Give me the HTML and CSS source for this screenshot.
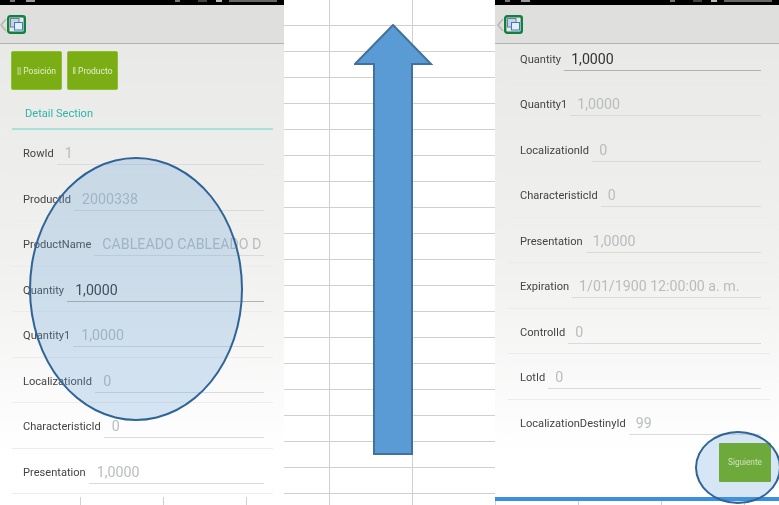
FILE: index.html
```html
<!DOCTYPE html>
<html>
<head>
    <title>Detail Section</title>
    <link rel="stylesheet" href="styles.css">
</head>
<body>
    <div class="sheet">
        <!-- First screen: top of the form -->
        <div class="phone">
            <div class="status">
                <span class="dot dot-a"></span><span class="dot dot-b"></span>
                <span class="dot dot-c"></span><span class="dot dot-d"></span><span class="dot dot-e"></span><span class="dot dot-f"></span>
            </div>
            <div class="toolbar">
                <svg class="back" width="7" height="14" viewBox="0 0 7 14"><path d="M6 1 L1 7 L6 13" fill="none" stroke="#b4b6b4" stroke-width="1.5"/></svg>
                <svg class="app-icon" width="19" height="19" viewBox="0 0 19 19">
                    <rect x="1.2" y="1.2" width="16.6" height="16.6" rx="2" fill="#e3e9ec" stroke="#12803f" stroke-width="2.4"/>
                    <rect x="3.5" y="3.5" width="8.5" height="8.5" fill="#c6d3e4" stroke="#6d7f99"/>
                    <rect x="7.5" y="7.5" width="8" height="7.5" fill="#e6eef6" stroke="#3f78c4"/>
                </svg>
            </div>
            <div class="content">
                <div class="actions">
                    <button class="action">|| Posición</button>
                    <button class="action">‖ Producto</button>
                </div>
                <div class="section-tab">Detail Section</div>
                <div class="rows">
                    <div class="row"><span class="label">RowId</span><span class="field">1</span></div>
                    <div class="row"><span class="label">ProductId</span><span class="field">2000338</span></div>
                    <div class="row"><span class="label">ProductName</span><span class="field">CABLEADO CABLEADO D</span></div>
                    <div class="row"><span class="label">Quantity</span><span class="field active">1,0000</span></div>
                    <div class="row"><span class="label">Quantity1</span><span class="field">1,0000</span></div>
                    <div class="row"><span class="label">LocalizationId</span><span class="field">0</span></div>
                    <div class="row"><span class="label">CharacteristicId</span><span class="field">0</span></div>
                    <div class="row"><span class="label">Presentation</span><span class="field">1,0000</span></div>
                </div>
            </div>
        </div>

        <!-- Second screen: form scrolled to the end -->
        <div class="phone phone-end">
            <div class="status">
                <span class="dot dot-a"></span><span class="dot dot-b"></span>
                <span class="dot dot-c"></span><span class="dot dot-d"></span><span class="dot dot-e"></span><span class="dot dot-f"></span>
            </div>
            <div class="toolbar">
                <svg class="back" width="7" height="14" viewBox="0 0 7 14"><path d="M6 1 L1 7 L6 13" fill="none" stroke="#b4b6b4" stroke-width="1.5"/></svg>
                <svg class="app-icon" width="19" height="19" viewBox="0 0 19 19">
                    <rect x="1.2" y="1.2" width="16.6" height="16.6" rx="2" fill="#e3e9ec" stroke="#12803f" stroke-width="2.4"/>
                    <rect x="3.5" y="3.5" width="8.5" height="8.5" fill="#c6d3e4" stroke="#6d7f99"/>
                    <rect x="7.5" y="7.5" width="8" height="7.5" fill="#e6eef6" stroke="#3f78c4"/>
                </svg>
            </div>
            <div class="content">
                <div class="rows rows-scrolled">
                    <div class="row"><span class="label">Quantity</span><span class="field active">1,0000</span></div>
                    <div class="row"><span class="label">Quantity1</span><span class="field">1,0000</span></div>
                    <div class="row"><span class="label">LocalizationId</span><span class="field">0</span></div>
                    <div class="row"><span class="label">CharacteristicId</span><span class="field">0</span></div>
                    <div class="row"><span class="label">Presentation</span><span class="field">1,0000</span></div>
                    <div class="row"><span class="label">Expiration</span><span class="field">1/01/1900 12:00:00 a. m.</span></div>
                    <div class="row"><span class="label">ControlId</span><span class="field">0</span></div>
                    <div class="row"><span class="label">LotId</span><span class="field">0</span></div>
                    <div class="row row-last"><span class="label">LocalizationDestinyId</span><span class="field">99</span></div>
                </div>
                <div class="next-wrap">
                    <button class="next">Siguiente</button>
                </div>
            </div>
        </div>
    </div>

    <!-- Annotations drawn on top of the sheet -->
    <div class="mark mark-large"></div>
    <div class="mark mark-small"></div>
    <svg class="arrow" width="80" height="432" viewBox="0 0 80 432">
        <path d="M39 1 L77 40 L58 40 L58 430 L20 430 L20 40 L1 40 Z" fill="#5b9bd5" stroke="#41719c" stroke-width="2"/>
    </svg>
</body>
</html>
```

FILE: styles.css
```css
html, body {
    margin: 0;
    height: 100%;
    overflow: hidden;
}
body {
    position: relative;
    font-family: Roboto, Arial, sans-serif;
    background-color: #fff;
    background-image:
        linear-gradient(to right, transparent 82px, #d0d0d0 82px),
        linear-gradient(to bottom, transparent 25px, #d0d0d0 25px);
    background-size: 83px 26px;
    background-position: 81px 0;
}
.sheet {
    display: flex;
    justify-content: space-between;
    width: 779px;
}
.phone {
    width: 284px;
    height: 497px;
    display: flex;
    flex-direction: column;
    overflow: hidden;
    filter: blur(0.4px);
}
.phone-end {
    height: 501px;
}

/* Status bar, only a sliver of it is visible */
.status {
    height: 5px;
    flex: none;
    background-color: #000;
    position: relative;
}
.dot {
    position: absolute;
    top: 0;
    height: 2px;
    background-color: #777;
}
.dot-a { left: 10px; width: 5px; }
.dot-b { left: 26px; width: 9px; background-color: #999; }
.dot-c { left: 175px; width: 5px; }
.dot-d { left: 198px; width: 9px; background-color: #444; }
.dot-e { left: 216px; width: 6px; background-color: #bbb; }
.dot-f { left: 229px; width: 48px; background-color: #666; }

.toolbar {
    height: 38px;
    flex: none;
    display: flex;
    align-items: center;
    background-color: #dfe0de;
    border-bottom: 1px solid #b3b3b1;
}
.phone-end .toolbar {
    padding-left: 2px;
}
.back {
    flex: none;
    margin-top: 1px;
}
.app-icon {
    flex: none;
    margin-top: 1px;
}

.content {
    flex: 1;
    min-height: 0;
    overflow: hidden;
    background: linear-gradient(to bottom, #e9e9e8 0%, #f1f1f0 50%, #fff 90%);
}
.actions {
    display: flex;
    gap: 5px;
    padding: 7px 0 0 11px;
}
.action {
    width: 51px;
    height: 39px;
    padding: 0;
    border: 1px solid #8cc02c;
    border-radius: 2px;
    background-color: #7aae14;
    color: #e4efcf;
    font-family: Roboto, Arial, sans-serif;
    font-size: 8.5px;
}
.section-tab {
    height: 38px;
    margin: 0 11px 0 12px;
    padding-left: 13px;
    line-height: 47px;
    font-size: 11.1px;
    color: #2fb5a8;
    border-bottom: 2px solid #a6e2da;
}
.rows {
    margin: 0 11px 0 12px;
}
.rows-scrolled {
    margin: -8.5px 9px 0 13px;
}
.row {
    height: 45.5px;
    box-sizing: border-box;
    display: flex;
    gap: 3px;
    padding: 12px 9px 0 11px;
    border-bottom: 1px solid #ececeb;
}
.rows-scrolled .row {
    padding-left: 12px;
}
.row-last {
    border-bottom: 0;
}
.label {
    flex: none;
    height: 22px;
    line-height: 24px;
    font-size: 11.1px;
    color: #444;
}
.field {
    flex: 1;
    min-width: 0;
    height: 22px;
    padding: 0 4px 0 8px;
    line-height: 22px;
    font-size: 14.2px;
    color: #b9bcbe;
    white-space: nowrap;
    overflow: hidden;
    border-bottom: 1px solid #d9dbdb;
}
.rows-scrolled .field {
    padding-left: 7px;
}
.field.active {
    color: #333;
    border-bottom: 1px solid #b0b2b2;
}
.next-wrap {
    display: flex;
    justify-content: flex-end;
    padding-right: 8px;
    margin-top: -2.5px;
}
/* colours are brighter than they look, the small mark is painted over this button */
.next {
    width: 52px;
    height: 39px;
    padding: 0;
    border: 0;
    border-radius: 1px;
    background-color: #75af09;
    color: #f5fab3;
    font-family: Roboto, Arial, sans-serif;
    font-size: 8.2px;
}
.phone-end .content {
    border-bottom: 4px solid #3a8ee6;
}

/* Annotations */
.mark {
    position: absolute;
    box-sizing: border-box;
    border: 2px solid #2f6497;
    border-radius: 50%;
    background-color: rgba(91, 155, 213, 0.25);
}
.mark-large {
    left: 29px;
    top: 157px;
    width: 214px;
    height: 264px;
}
.mark-small {
    left: 695px;
    top: 431px;
    width: 86px;
    height: 73px;
}
.arrow {
    position: absolute;
    left: 354px;
    top: 24px;
}
```
